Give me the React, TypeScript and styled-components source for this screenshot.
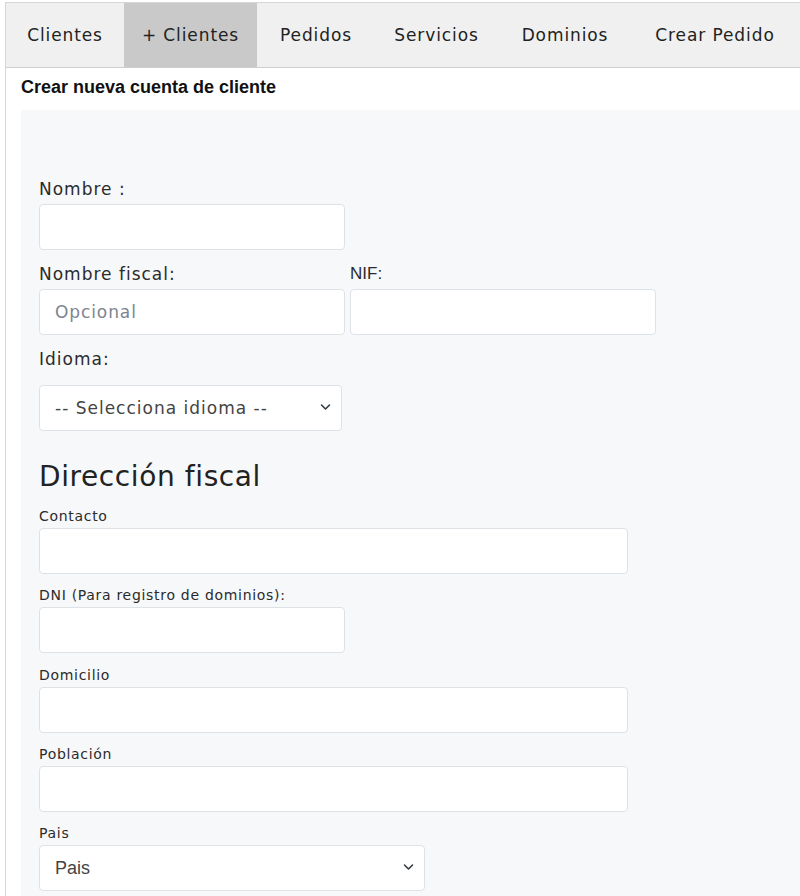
import React from 'react';
import styled, { createGlobalStyle } from 'styled-components';

const GlobalStyle = createGlobalStyle`
  html, body {
    margin: 0;
    padding: 0;
    background: #fff;
    overflow: hidden;
  }
  body {
    font-family: "DejaVu Sans", "Open Sans", sans-serif;
    color: #212529;
  }
`;

const Wrapper = styled.div`
  margin: 2px 0 0 5px;
  border-top: 1px solid #d6d6d6;
  border-left: 1px solid #d6d6d6;
  min-height: 900px;
`;

const TabBar = styled.nav`
  display: flex;
  height: 64px;
  background: #f0f0f0;
  border-bottom: 1px solid #cfcfcf;
`;

const Tab = styled.div<{ $active?: boolean; $w: number }>`
  display: flex;
  align-items: center;
  justify-content: center;
  width: ${p => p.$w}px;
  font-size: 17px;
  letter-spacing: 0.9px;
  color: #222;
  background: ${p => (p.$active ? '#c9c9c9' : 'transparent')};
`;

const Title = styled.h4`
  margin: 0;
  padding: 9px 0 0 15px;
  height: 33px;
  font-family: "Liberation Sans", Arial, sans-serif;
  font-weight: bold;
  font-size: 18px;
  color: #111;
`;

const Panel = styled.div`
  margin-left: 15px;
  background: #f7f8fa;
  padding: 67px 18px 40px;
  min-height: 800px;
`;

const Row = styled.div`
  display: flex;
  gap: 5px;
`;

const Group = styled.div<{ $w: number; $mb?: number }>`
  display: flex;
  flex-direction: column;
  width: ${p => p.$w}px;
  margin-bottom: ${p => p.$mb ?? 12}px;
`;

const Label = styled.label<{ $small?: boolean; $arial?: boolean; $gap?: number }>`
  font-size: ${p => (p.$small ? '14px' : '17px')};
  letter-spacing: ${p => (p.$arial ? '0' : p.$small ? '0.7px' : '1px')};
  line-height: ${p => (p.$small ? '20px' : '24px')};
  font-family: ${p => (p.$arial ? '"Liberation Sans", Arial, sans-serif' : 'inherit')};
  color: #2b2b2b;
  margin-bottom: ${p => p.$gap ?? 3}px;
`;

const Input = styled.input`
  box-sizing: border-box;
  height: 46px;
  width: 100%;
  border: 1px solid #dee2e6;
  border-radius: 4px;
  background: #fff;
  padding: 0 15px;
  font-family: inherit;
  font-size: 17px;
  letter-spacing: 0.9px;
  color: #212529;
  &::placeholder {
    color: #7d8590;
  }
`;

const SelectBox = styled.div`
  position: relative;
  width: 100%;
  > svg {
    position: absolute;
    right: 11px;
    top: 18px;
    pointer-events: none;
  }
`;

const Select = styled.select<{ $arial?: boolean }>`
  box-sizing: border-box;
  appearance: none;
  height: 46px;
  width: 100%;
  border: 1px solid #dee2e6;
  border-radius: 4px;
  background: #fff;
  padding: 0 15px;
  font-family: ${p => (p.$arial ? '"Liberation Sans", Arial, sans-serif' : 'inherit')};
  font-size: ${p => (p.$arial ? '18px' : '17px')};
  letter-spacing: ${p => (p.$arial ? '0' : '1px')};
  color: #444;
`;

const SectionTitle = styled.h3`
  margin: 0 0 9px;
  font-weight: 400;
  font-size: 28px;
  letter-spacing: 0.6px;
  line-height: 40px;
  color: #222;
`;

const Chevron = () => (
  <svg width="11" height="8" viewBox="0 0 16 12">
    <path d="M2 3l6 6 6-6" fill="none" stroke="#343a40" strokeWidth="2.4" strokeLinecap="round" strokeLinejoin="round" />
  </svg>
);

const tabs: [string, number][] = [
  ['Clientes', 118],
  ['+ Clientes', 133],
  ['Pedidos', 118],
  ['Servicios', 123],
  ['Dominios', 134],
  ['Crear Pedido', 166],
];

export default function App() {
  return (
    <>
      <GlobalStyle />
      <Wrapper>
        <TabBar>
          {tabs.map(([t, w]) => (
            <Tab key={t} $w={w} $active={t === '+ Clientes'}>{t}</Tab>
          ))}
        </TabBar>
        <Title>Crear nueva cuenta de cliente</Title>
        <Panel>
          <Group $w={306}>
            <Label>Nombre :</Label>
            <Input type="text" />
          </Group>
          <Row>
            <Group $w={306}>
              <Label>Nombre fiscal:</Label>
              <Input type="text" placeholder="Opcional" />
            </Group>
            <Group $w={306}>
              <Label $arial>NIF:</Label>
              <Input type="text" />
            </Group>
          </Row>
          <Group $w={303} $mb={26}>
            <Label $gap={14}>Idioma:</Label>
            <SelectBox>
              <Select defaultValue="">
                <option value="">-- Selecciona idioma --</option>
              </Select>
              <Chevron />
            </SelectBox>
          </Group>
          <SectionTitle>Dirección fiscal</SectionTitle>
          <Group $w={589} $mb={11}>
            <Label $small $gap={2}>Contacto</Label>
            <Input type="text" />
          </Group>
          <Group $w={306} $mb={12}>
            <Label $small $gap={2}>DNI (Para registro de dominios):</Label>
            <Input type="text" />
          </Group>
          <Group $w={589} $mb={11}>
            <Label $small $gap={2}>Domicilio</Label>
            <Input type="text" />
          </Group>
          <Group $w={589} $mb={11}>
            <Label $small $gap={2}>Población</Label>
            <Input type="text" />
          </Group>
          <Group $w={386}>
            <Label $small $gap={2}>Pais</Label>
            <SelectBox>
              <Select $arial defaultValue="">
                <option value="">Pais</option>
              </Select>
              <Chevron />
            </SelectBox>
          </Group>
        </Panel>
      </Wrapper>
    </>
  );
}
